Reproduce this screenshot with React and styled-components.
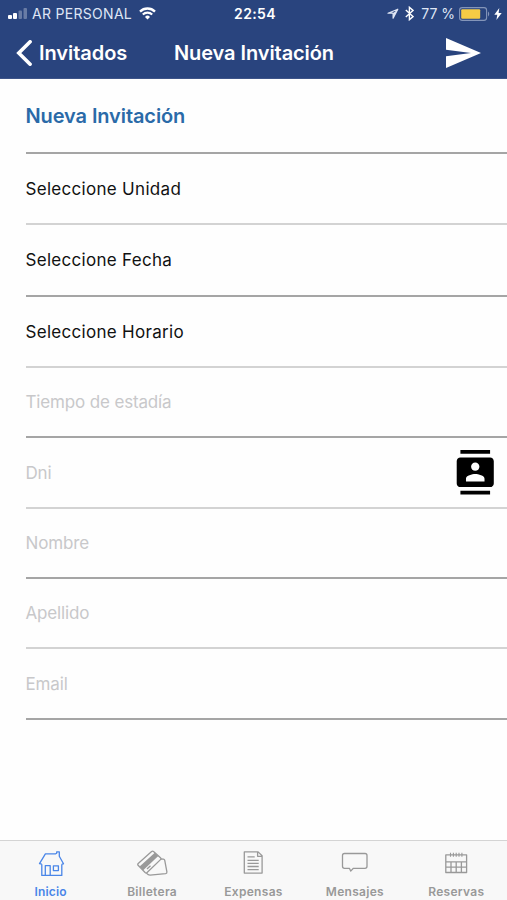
import React from "react";
import styled, { createGlobalStyle } from "styled-components";

const GlobalStyle = createGlobalStyle`
  * {
    box-sizing: border-box;
  }
  body {
    margin: 0;
    background-color: #fefefe;
    font-family: Inter, "Liberation Sans", sans-serif;
  }
`;

const Screen = styled.div`
  display: flex;
  flex-direction: column;
  width: 100%;
  height: 900px;
  overflow: hidden;
  background-color: #fefefe;
`;

const Header = styled.header`
  height: 79px;
  color: white;
  background-color: #29447e;
  border-bottom: 1px solid #3d5489;
`;

const StatusBar = styled.div`
  display: grid;
  grid-template-columns: 1fr auto 1fr;
  align-items: center;
  height: 27px;
  padding: 0 5px 0 8px;
`;

const StatusGroup = styled.div`
  display: flex;
  align-items: center;
  justify-content: ${(p) => (p.$end ? "flex-end" : "flex-start")};
  color: #dfe6f5;
`;

const StatusItem = styled.span`
  display: flex;
  align-items: center;
  font-size: 14px;
  line-height: 18px;
  white-space: nowrap;
  letter-spacing: ${(p) => p.$spacing || "0"};
  margin: ${(p) => p.$margin || "0"};
`;

const Clock = styled.span`
  font-size: 14px;
  font-weight: 600;
  line-height: 18px;
  letter-spacing: 0.35px;
`;

const NavBar = styled.div`
  display: grid;
  grid-template-columns: 1fr auto 1fr;
  align-items: center;
  height: 51px;
  padding: 0 26px 0 16px;
`;

const BackButton = styled.div`
  display: flex;
  align-items: center;
  gap: 7px;
  font-size: 20px;
  font-weight: 600;
  letter-spacing: -0.05px;
`;

const NavTitle = styled.h1`
  margin: 0 0 0 11px;
  font-size: 20px;
  font-weight: 600;
  letter-spacing: -0.08px;
`;

const SendButton = styled.div`
  display: flex;
  justify-content: flex-end;
`;

const Form = styled.main`
  flex: 1;
  padding-left: 25.5px;
`;

const Row = styled.div`
  display: flex;
  align-items: center;
  justify-content: space-between;
  height: ${(p) => p.$height}px;
  padding-right: 10px;
  font-size: 17px;
  color: ${(p) => (p.$placeholder ? "#c8c8ca" : "#111")};
  letter-spacing: ${(p) => (p.$placeholder ? "-0.15px" : "0.3px")};
  border-bottom: 2px solid ${(p) => (p.$light ? "#d3d3d3" : "#a5a5a5")};
`;

const SectionRow = styled(Row)`
  font-size: 20px;
  font-weight: 600;
  color: #2a6aa8;
  letter-spacing: -0.1px;
`;

const RowLabel = styled.span`
  line-height: 20px;
`;

const TabBar = styled.nav`
  display: grid;
  grid-template-columns: repeat(5, 1fr);
  height: 60px;
  background-color: #f8f8f8;
  border-top: 1px solid #d4d4d4;
`;

const Tab = styled.div`
  display: flex;
  flex-direction: column;
  align-items: center;
  padding-top: 9px;
  color: ${(p) => (p.$active ? "#4a86e8" : "#999")};
`;

const TabLabel = styled.span`
  margin-top: 7px;
  font-size: 12px;
  font-weight: 600;
  line-height: 14px;
  letter-spacing: ${(p) => (p.$active ? "0.15px" : "0.3px")};
`;

const SignalIcon = () => (
  <svg width="20" height="12" viewBox="0 0 20 12" fill="#fff">
    <rect x="0" y="7" width="4" height="4" rx="1" />
    <rect x="5" y="5" width="4" height="6" rx="1" />
    <rect x="10.5" y="2.5" width="3.5" height="8.5" rx="1" opacity="0.3" />
    <rect x="15.5" y="0" width="3.5" height="11" rx="1" opacity="0.3" />
  </svg>
);

const WifiIcon = () => (
  <svg width="17" height="13" viewBox="0 0 17 13" fill="none" stroke="#fff">
    <path d="M1 4.6a10.6 10.6 0 0 1 15 0" strokeWidth="2.3" />
    <path d="M3.8 7.6a6.6 6.6 0 0 1 9.4 0" strokeWidth="2.1" />
    <path d="M8.5 12.4 6 9.9a3.5 3.5 0 0 1 5 0z" fill="#fff" stroke="none" />
  </svg>
);

const LocationIcon = () => (
  <svg width="12" height="12" viewBox="0 0 12 12" fill="none" stroke="currentColor">
    <path d="M10.8 1.2 1 5.2h5.1v5z" strokeWidth="1.2" strokeLinejoin="round" />
    <path d="M10.8 1.2 6.1 5.2v5z" fill="currentColor" stroke="none" />
  </svg>
);

const BluetoothIcon = () => (
  <svg width="9" height="15" viewBox="0 0 9 15" fill="none" stroke="#fff">
    <path d="m.8 4 7.2 6.6-3.6 3.1V1.3L8 4.4.8 11" strokeWidth="1.4" />
  </svg>
);

const BatteryIcon = () => (
  <svg width="31" height="14" viewBox="0 0 31 14">
    <rect x="0.6" y="0.6" width="27" height="12.8" rx="2.6" fill="none" stroke="#8495b9" strokeWidth="1.1" />
    <rect x="2.2" y="2.2" width="19" height="9.6" rx="1" fill="#f5cb45" />
    <path d="M29 4.6c1.6.7 1.6 4.1 0 4.8z" fill="#8495b9" />
  </svg>
);

const BoltIcon = () => (
  <svg width="8" height="12" viewBox="0 0 8 12" fill="#fff">
    <path d="M5.3 0 .3 6.8h3L2.4 12l5.3-7H4.6z" />
  </svg>
);

const BackIcon = () => (
  <svg width="16" height="26" viewBox="0 0 16 26" fill="none" stroke="#fff">
    <path d="M14.1 1.8 2.8 13l11.3 11.2" strokeWidth="3.6" strokeLinecap="round" />
  </svg>
);

const SendIcon = () => (
  <svg width="35" height="30" viewBox="2 3 21 18" fill="#fff">
    <path d="M2.01 21 23 12 2.01 3 2 10l15 2-15 2z" />
  </svg>
);

const ContactsIcon = () => (
  <svg width="44.5" height="44.5" viewBox="0 0 24 24" fill="#000">
    <path d="M20 0H4v2h16V0zM4 24h16v-2H4v2zM20 4H4c-1.1 0-2 .9-2 2v12c0 1.1.9 2 2 2h16c1.1 0 2-.9 2-2V6c0-1.1-.9-2-2-2zm-8 2.75c1.24 0 2.25 1.01 2.25 2.25s-1.01 2.25-2.25 2.25S9.75 10.24 9.75 9 10.76 6.75 12 6.75zM17 17H7v-1.5c0-1.67 3.33-2.5 5-2.5s5 .83 5 2.5V17z" />
  </svg>
);

const TabSvg = ({ children }) => (
  <svg
    width="32"
    height="28"
    viewBox="0 0 32 28"
    fill="none"
    stroke="currentColor"
    strokeWidth="1.3"
    strokeLinejoin="round"
  >
    {children}
  </svg>
);

const HomeIcon = () => (
  <TabSvg>
    <path d="M6.8 14.2v11.2h20V14.2M6.8 14.2l-2.3-.6 5.9-9.8h10.3l1-.6V1.8h2.6v4.4l4.2 7.6-1.7.4" />
    <path d="M10.3 25.2v-9.6h4.9v9.6" />
    <rect x="18.4" y="15.8" width="5" height="4.8" />
  </TabSvg>
);

const CardsIcon = () => (
  <TabSvg>
    <path d="M2.2 13.4 15.6 1.5q1-.8 1.9 0l7 6.3q.9.9 0 1.8L11.1 22.5q-1 .9-2 0L2.1 15.3q-.7-.9.1-1.9z" />
    <path d="m3.6 16.4 15.2-13.6 3.5 3.1L7.2 20.2z" fill="currentColor" stroke="none" />
    <path d="m11 19 3.5-3.3M25 9l2.4.2q1 .1 1.3 1l2.2 11.6q.2 1.6-1.3 1.8L14 25.1q-1.8 0-3.6-2" />
  </TabSvg>
);

const DocumentIcon = () => (
  <TabSvg>
    <path d="M7.3 1.9h13.8l4 3.8v17.4H7.3zM20.6 2.1v4.2h4.2M10.5 6.9h7.2M10.5 10.3h11.2M10.5 13.4h11.2M10.5 16.5h11.2M10.5 19.6h11.2" />
  </TabSvg>
);

const MessageIcon = () => (
  <TabSvg>
    <path d="M5.5 3.5H26q2 0 2 2v10.8q0 2-2 2H14.4l-2.7 2.8-1.3-2.8H5.5q-2 0-2-2V5.5q0-2 2-2z" />
  </TabSvg>
);

const CalendarIcon = () => (
  <TabSvg>
    <path d="M5.8 4.9h20.8v17.6H5.8zM5.8 11.8h20.8M5.8 17.1h20.8M11 11.8v10.7M16.2 11.8v10.7M21.4 11.8v10.7" />
    <path d="M10.5 2.8v4M13.4 2.8v4M16.2 2.8v4M19 2.8v4M21.9 2.8v4" strokeWidth="1.1" />
  </TabSvg>
);

const fields = [
  { label: "Seleccione Unidad", height: 71, light: true },
  { label: "Seleccione Fecha", height: 72 },
  { label: "Seleccione Horario", height: 71, light: true },
  { label: "Tiempo de estadía", height: 70, placeholder: true },
  { label: "Dni", height: 71, placeholder: true, light: true, icon: <ContactsIcon /> },
  { label: "Nombre", height: 70, placeholder: true },
  { label: "Apellido", height: 70, placeholder: true, light: true },
  { label: "Email", height: 71, placeholder: true },
];

const tabs = [
  { label: "Inicio", icon: <HomeIcon />, active: true },
  { label: "Billetera", icon: <CardsIcon /> },
  { label: "Expensas", icon: <DocumentIcon /> },
  { label: "Mensajes", icon: <MessageIcon /> },
  { label: "Reservas", icon: <CalendarIcon /> },
];

function App() {
  return (
    <Screen>
      <GlobalStyle />
      <Header>
        <StatusBar>
          <StatusGroup>
            <SignalIcon />
            <StatusItem $margin="0 7px 0 4px" $spacing="0.3px">
              AR PERSONAL
            </StatusItem>
            <WifiIcon />
          </StatusGroup>
          <Clock>22:54</Clock>
          <StatusGroup $end>
            <LocationIcon />
            <StatusItem $margin="0 0 0 6px">
              <BluetoothIcon />
            </StatusItem>
            <StatusItem $margin="0 4px 0 7px">77 %</StatusItem>
            <BatteryIcon />
            <StatusItem $margin="0 0 0 4px">
              <BoltIcon />
            </StatusItem>
          </StatusGroup>
        </StatusBar>
        <NavBar>
          <BackButton>
            <BackIcon />
            Invitados
          </BackButton>
          <NavTitle>Nueva Invitación</NavTitle>
          <SendButton>
            <SendIcon />
          </SendButton>
        </NavBar>
      </Header>
      <Form>
        <SectionRow $height={75}>Nueva Invitación</SectionRow>
        {fields.map((field) => (
          <Row
            key={field.label}
            $height={field.height}
            $light={field.light}
            $placeholder={field.placeholder}
          >
            <RowLabel>{field.label}</RowLabel>
            {field.icon}
          </Row>
        ))}
      </Form>
      <TabBar>
        {tabs.map((tab) => (
          <Tab key={tab.label} $active={tab.active}>
            {tab.icon}
            <TabLabel $active={tab.active}>{tab.label}</TabLabel>
          </Tab>
        ))}
      </TabBar>
    </Screen>
  );
}

export default App;
